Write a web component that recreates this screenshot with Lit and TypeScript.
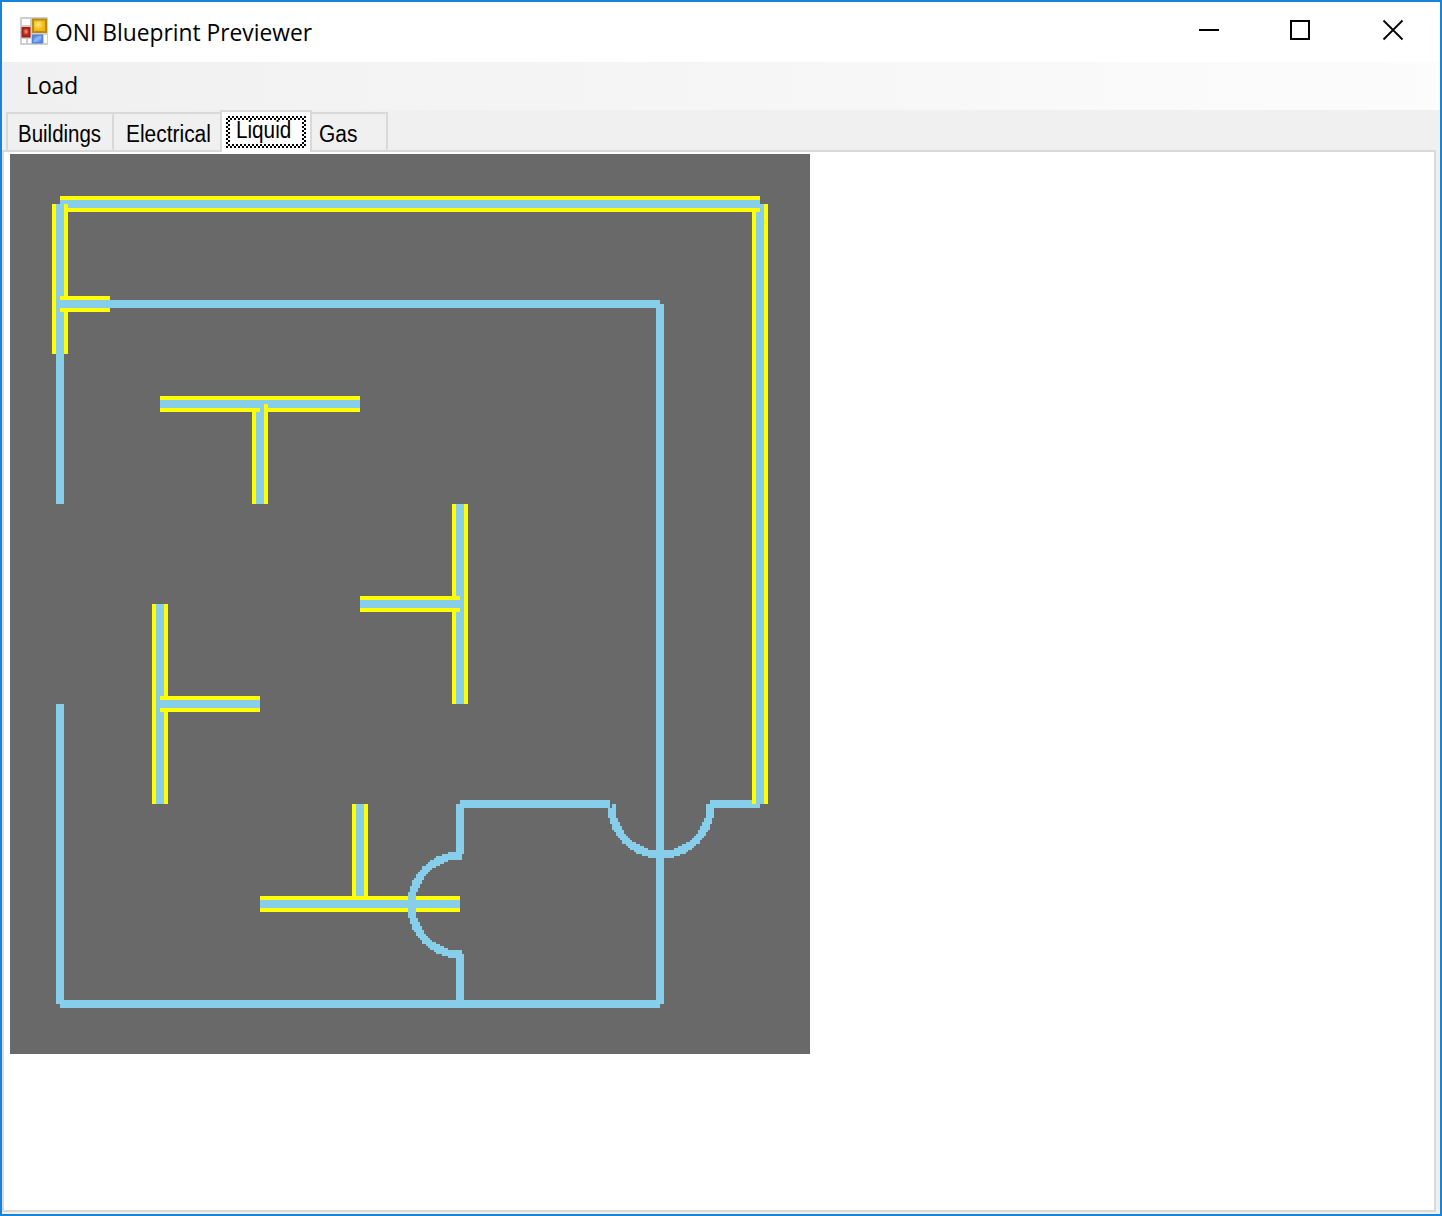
import { LitElement, html, css, svg } from "lit";
import { customElement } from "lit/decorators.js";

type Pipe = [x1: number, y1: number, x2: number, y2: number, insulated?: boolean];

// Segments in drawing order; later ones cover earlier ones.
const PIPES: Pipe[] = [
  [50, 50, 750, 50, true],
  [50, 50, 50, 200, true],
  [50, 200, 50, 350],
  [50, 150, 100, 150, true],
  [100, 150, 650, 150],
  [650, 150, 650, 850],
  [50, 550, 50, 850],
  [50, 850, 650, 850],
  [250, 250, 350, 250, true],
  [250, 250, 250, 350, true],
  [150, 250, 250, 250, true],
  [450, 350, 450, 550, true],
  [350, 450, 450, 450, true],
  [150, 450, 150, 650, true],
  [150, 550, 250, 550, true],
  [350, 650, 350, 750, true],
  [250, 750, 450, 750, true],
  [450, 650, 450, 700],
  [450, 800, 450, 850],
  [450, 650, 600, 650],
  [700, 650, 750, 650],
  [750, 50, 750, 650, true],
  [740, 50, 750, 50, true],
];

// Half rings rasterised on the 2px drawing grid.
function bridge(cx: number, cy: number, keep: (x: number, y: number) => boolean): string {
  let d = "";
  for (let y = cy - 55; y < cy + 55; y += 2) {
    for (let x = cx - 55; x < cx + 55; x += 2) {
      const r = Math.hypot(x + 1 - cx, y + 1 - cy);
      if (r >= 45.65 && r <= 53.75 && keep(x, y)) d += `M${x} ${y}h2v2h-2z`;
    }
  }
  return d;
}
const BRIDGES = [
  bridge(651, 651, (x, y) => y >= (x < 602 ? 654 : 650)),
  bridge(451, 751, (x) => x < 452),
];

function bar([x1, y1, x2, y2]: Pipe, half: number, cls: string) {
  return x1 === x2
    ? svg`<rect class=${cls} x=${x1 - half} y=${y1} width=${half * 2} height=${y2 - y1}></rect>`
    : svg`<rect class=${cls} x=${x1} y=${y1 - half} width=${x2 - x1} height=${half * 2}></rect>`;
}

@customElement("pipe-canvas")
export class PipeCanvas extends LitElement {
  static styles = css`
    :host { display: block; width: 800px; height: 900px; }
    svg { display: block; background: #696969; }
    .jacket { fill: #ffff00; }
    .pipe { fill: #87ceeb; }
  `;
  render() {
    return html`<svg width="800" height="900" viewBox="0 0 800 900" shape-rendering="crispEdges">
      ${PIPES.map((p) => svg`${p[4] ? bar(p, 8, "jacket") : ""}${bar(p, 4, "pipe")}`)}
      ${BRIDGES.map((d) => svg`<path class="pipe" d=${d}></path>`)}
    </svg>`;
  }
}

@customElement("app-root")
export class AppRoot extends LitElement {
  static styles = css`
    :host { display: block; }
    * { box-sizing: border-box; }
    .window {
      display: flex; flex-direction: column; width: 1442px; height: 1216px;
      border: 2px solid #1883d7; background: #f0f0f0; color: #000; overflow: hidden;
    }
    .titlebar { display: flex; height: 60px; background: #fff; flex: none; }
    .logo { margin: 14px 0 0 17px; width: 30px; height: 30px; }
    .title {
      margin-left: 6px; flex: 1; white-space: nowrap;
      font: 22.8px/60px "Open Sans", sans-serif; padding-top: 1px;
    }
    .controls { display: flex; }
    .controls svg { display: block; }
    .menubar {
      flex: none; height: 48px; padding: 1px 0 0 24px;
      background: linear-gradient(90deg, #f0f0f0, #fcfcfc);
      font: 22.8px/46px "Open Sans", sans-serif;
    }
    .tabs { flex: none; display: flex; height: 42px; padding-left: 4px; align-items: flex-end; margin-bottom: -2px; z-index: 1; }
    .tab {
      height: 38px; margin-bottom: 2px; border: 2px solid #d9d9d9; border-bottom: 0; border-left: 0;
      font: 23px/41px "Liberation Sans", sans-serif; padding-left: 10px; white-space: nowrap;
    }
    .tab span { display: inline-block; transform-origin: 0 50%; }
    .buildings { width: 108px; border-left: 2px solid #d9d9d9; }
    .buildings span { transform: scaleX(0.89); }
    .electrical { width: 106px; border-right: 0; padding-left: 12px; }
    .electrical span { transform: scaleX(0.91); }
    .liquid {
      width: 92px; height: 42px; margin-bottom: 0; background: #fff; border-left: 2px solid #d9d9d9;
      padding: 4px 4px 0;
    }
    .focus {
      width: 80px; height: 32px; padding: 4px;
      background: repeating-conic-gradient(#000 0 25%, #fff 0 50%) 0 0 / 4px 4px;
    }
    .focus div { background: #fff; height: 24px; line-height: 21px; padding-left: 6px; }
    .liquid span { transform: scaleX(0.9); }
    .gas { width: 76px; padding-left: 7px; }
    .gas span { transform: scaleX(0.91); }
    .page {
      flex: none; width: 1434px; height: 1062px; border: 2px solid #d9d9d9;
      background: #fff; padding: 2px 0 0 6px;
    }
  `;

  render() {
    return html`<div class="window">
      <div class="titlebar">
        <svg class="logo" viewBox="0 0 30 30">
          <defs>
            <radialGradient id="y" cx=".4" cy=".4"><stop offset="0" stop-color="#ffe98a"/><stop offset="1" stop-color="#f2b90f"/></radialGradient>
            <radialGradient id="r" cx=".5" cy=".45"><stop offset="0" stop-color="#f49a83"/><stop offset="1" stop-color="#bf2418"/></radialGradient>
            <linearGradient id="b" x2="1" y2="1"><stop offset="0" stop-color="#4a7fe0"/><stop offset=".5" stop-color="#8db9ff"/><stop offset="1" stop-color="#4a7fe0"/></linearGradient>
          </defs>
          <rect x="1" y="1" width="28" height="28" rx="1" fill="#cecece"/>
          <path d="M3 3h8v6H3zM3 23h4v4H3zM9 23h3v4H9zM25 19h3v8h-3z" fill="#fff"/>
          <rect x="13" y="2.5" width="15" height="14.5" fill="#b78a18"/>
          <rect x="15" y="4.5" width="11" height="10.500" fill="url(#y)"/>
          <rect x="2.500" y="11" width="9" height="10.500" fill="#9f2018"/>
          <rect x="4" y="12.500" width="6" height="7" fill="url(#r)"/>
          <rect x="13" y="18.500" width="11" height="9" fill="#5584d6"/>
          <rect x="14.500" y="20" width="8" height="6" fill="url(#b)"/>
        </svg>
        <div class="title">ONI Blueprint Previewer</div>
        <div class="controls">
          <svg width="252" height="60" viewBox="1188 2 252 60" fill="none" stroke="#000" stroke-width="2">
            <path d="M1199 30h20M1291 21h18v18h-18z" shape-rendering="crispEdges"/>
            <path d="M1383.500 20.500l19 19M1402.500 20.500l-19 19" stroke-width="1.800"/>
          </svg>
        </div>
      </div>
      <div class="menubar">Load</div>
      <div class="tabs">
        <div class="tab buildings"><span>Buildings</span></div>
        <div class="tab electrical"><span>Electrical</span></div>
        <div class="tab liquid"><div class="focus"><div><span>Liquid</span></div></div></div>
        <div class="tab gas"><span>Gas</span></div>
      </div>
      <div class="page"><pipe-canvas></pipe-canvas></div>
    </div>`;
  }
}
